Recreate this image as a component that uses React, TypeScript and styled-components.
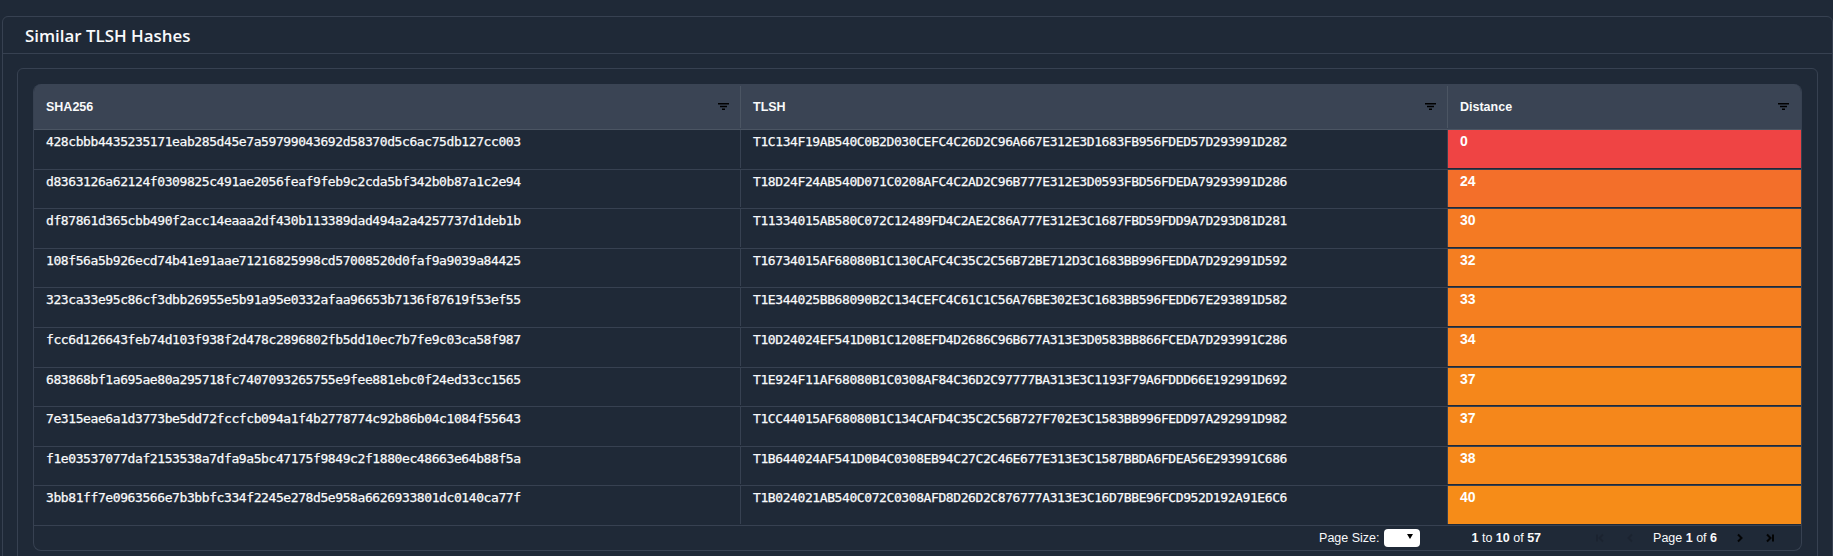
import React from 'react'
import styled, { createGlobalStyle } from 'styled-components'

interface HashRow {
  sha256: string
  tlsh: string
  distance: number
}

const rows: HashRow[] = [
  { sha256: '428cbbb4435235171eab285d45e7a59799043692d58370d5c6ac75db127cc003', tlsh: 'T1C134F19AB540C0B2D030CEFC4C26D2C96A667E312E3D1683FB956FDED57D293991D282', distance: 0 },
  { sha256: 'd8363126a62124f0309825c491ae2056feaf9feb9c2cda5bf342b0b87a1c2e94', tlsh: 'T18D24F24AB540D071C0208AFC4C2AD2C96B777E312E3D0593FBD56FDEDA79293991D286', distance: 24 },
  { sha256: 'df87861d365cbb490f2acc14eaaa2df430b113389dad494a2a4257737d1deb1b', tlsh: 'T11334015AB580C072C12489FD4C2AE2C86A777E312E3C1687FBD59FDD9A7D293D81D281', distance: 30 },
  { sha256: '108f56a5b926ecd74b41e91aae71216825998cd57008520d0faf9a9039a84425', tlsh: 'T16734015AF68080B1C130CAFC4C35C2C56B72BE712D3C1683BB996FEDDA7D292991D592', distance: 32 },
  { sha256: '323ca33e95c86cf3dbb26955e5b91a95e0332afaa96653b7136f87619f53ef55', tlsh: 'T1E344025BB68090B2C134CEFC4C61C1C56A76BE302E3C1683BB596FEDD67E293891D582', distance: 33 },
  { sha256: 'fcc6d126643feb74d103f938f2d478c2896802fb5dd10ec7b7fe9c03ca58f987', tlsh: 'T10D24024EF541D0B1C1208EFD4D2686C96B677A313E3D0583BB866FCEDA7D293991C286', distance: 34 },
  { sha256: '683868bf1a695ae80a295718fc7407093265755e9fee881ebc0f24ed33cc1565', tlsh: 'T1E924F11AF68080B1C0308AF84C36D2C97777BA313E3C1193F79A6FDDD66E192991D692', distance: 37 },
  { sha256: '7e315eae6a1d3773be5dd72fccfcb094a1f4b2778774c92b86b04c1084f55643', tlsh: 'T1CC44015AF68080B1C134CAFD4C35C2C56B727F702E3C1583BB996FEDD97A292991D982', distance: 37 },
  { sha256: 'f1e03537077daf2153538a7dfa9a5bc47175f9849c2f1880ec48663e64b88f5a', tlsh: 'T1B644024AF541D0B4C0308EB94C27C2C46E677E313E3C1587BBDA6FDEA56E293991C686', distance: 38 },
  { sha256: '3bb81ff7e0963566e7b3bbfc334f2245e278d5e958a6626933801dc0140ca77f', tlsh: 'T1B024021AB540C072C0308AFD8D26D2C876777A313E3C16D7BBE96FCD952D192A91E6C6', distance: 40 },
]

const distanceColor = (d: number): string =>
  `rgb(${Math.round(239 + d * 0.17)}, ${Math.round(68 + d * 1.8)}, ${Math.round(68 - d * 1.1)})`

const FilterIcon = () => (
  <FilterSvg viewBox="0 0 11 7" aria-hidden="true">
    <rect x="0" y="0" width="11" height="1.5" />
    <rect x="2" y="2.75" width="7" height="1.5" />
    <rect x="4" y="5.5" width="3" height="1.5" />
  </FilterSvg>
)

const App = (): JSX.Element => {
  return (
    <>
      <GlobalStyle />
      <Page>
        <OuterCard>
          <CardHeader>Similar TLSH Hashes</CardHeader>
          <CardBody>
            <InnerCard>
              <Grid>
                <HeaderRow>
                  <HeaderCell>
                    SHA256
                    <FilterIcon />
                  </HeaderCell>
                  <HeaderCell>
                    TLSH
                    <FilterIcon />
                  </HeaderCell>
                  <HeaderCell>
                    Distance
                    <FilterIcon />
                  </HeaderCell>
                </HeaderRow>

                {rows.map((row) => (
                  <Row key={row.sha256}>
                    <HashCell>{row.sha256}</HashCell>
                    <HashCell>{row.tlsh}</HashCell>
                    <DistanceCell style={{ background: distanceColor(row.distance) }}>
                      {row.distance}
                    </DistanceCell>
                  </Row>
                ))}

                <Paging>
                  <PageSize>
                    Page Size:
                    <SizeSelect>
                      <Caret />
                    </SizeSelect>
                  </PageSize>
                  <Summary>
                    <b>1</b> to <b>10</b> of <b>57</b>
                  </Summary>
                  <PagingNav>
                    <NavGroup>
                      <NavButton $disabled viewBox="0 0 10 10">
                        <path d="M2 1.5v7M8 1.5 4.5 5 8 8.5" />
                      </NavButton>
                      <NavButton $disabled viewBox="0 0 10 10">
                        <path d="M7 1.5 3.5 5 7 8.5" />
                      </NavButton>
                    </NavGroup>
                    <div>
                      Page <b>1</b> of <b>6</b>
                    </div>
                    <NavGroup>
                      <NavButton viewBox="0 0 10 10">
                        <path d="M3 1.5 6.5 5 3 8.5" />
                      </NavButton>
                      <NavButton viewBox="0 0 10 10">
                        <path d="M8 1.5v7M2 1.5 5.5 5 2 8.5" />
                      </NavButton>
                    </NavGroup>
                  </PagingNav>
                </Paging>
              </Grid>
            </InnerCard>
          </CardBody>
        </OuterCard>
      </Page>
    </>
  )
}

const GlobalStyle = createGlobalStyle`
  html, body {
    margin: 0;
    height: 556px;
    overflow: hidden;
    background: #1f2937;
  }
`

const Page = styled.div`
  padding: 16px 0 0 2px;
  height: 556px;
  box-sizing: border-box;
  overflow: hidden;
  color: #f9fafb;
`

const OuterCard = styled.section`
  border: 1px solid #374151;
  border-radius: 6px;
`

const CardHeader = styled.h2`
  margin: 0;
  height: 36px;
  padding-left: 22px;
  display: flex;
  align-items: center;
  border-bottom: 1px solid #374151;
  font: 600 16.9px 'Open Sans', sans-serif;
`

const CardBody = styled.div`
  padding: 14px;
`

const InnerCard = styled.div`
  border: 1px solid #374151;
  border-radius: 6px;
  padding: 15px;
`

const Grid = styled.div`
  border: 1px solid #374151;
  border-top: 0;
  border-radius: 8px;
  overflow: hidden;
`

const columns = 'grid-template-columns: 707px 707px 1fr;'

const HeaderRow = styled.div`
  display: grid;
  ${columns}
  height: 45px;
  background: #3a4454;
  border-bottom: 1px solid #4b5563;
`

const HeaderCell = styled.div`
  position: relative;
  display: flex;
  align-items: center;
  justify-content: space-between;
  padding: 0 12px;
  font: bold 12.5px 'Liberation Sans', Arial, sans-serif;

  &:not(:last-child)::after {
    content: '';
    position: absolute;
    right: 0;
    top: 2px;
    bottom: 1px;
    width: 1px;
    background: #4b5563;
  }
`

const FilterSvg = styled.svg`
  width: 11px;
  height: 7px;
  fill: #000;
`

const Row = styled.div`
  display: grid;
  ${columns}
  height: 39.6px;
  box-sizing: border-box;
  border-bottom: 1px solid #374151;
`

const HashCell = styled.div`
  padding: 4px 0 0 12px;
  border-right: 1px solid #374151;
  margin-bottom: 1px;
  font: 13px/15px 'DejaVu Sans Mono', monospace;
  letter-spacing: -0.41px;
  -webkit-text-stroke: 0.25px #f9fafb;
  white-space: nowrap;
  overflow: hidden;
`

const DistanceCell = styled.div`
  padding: 4px 0 0 12px;
  margin-bottom: 1px;
  font: bold 14px/15px 'Liberation Sans', Arial, sans-serif;
  color: #fff;
`

const Paging = styled.div`
  display: flex;
  align-items: center;
  justify-content: flex-end;
  height: 24px;
  padding: 1px 26px 0 0;
  box-sizing: border-box;
  font: 12.5px 'Liberation Sans', Arial, sans-serif;
`

const PageSize = styled.div`
  display: flex;
  align-items: center;
  gap: 4px;
  margin-right: 52px;
`

const SizeSelect = styled.div`
  position: relative;
  width: 36px;
  height: 18px;
  background: #fff;
  border-radius: 4px;
`

const Caret = styled.span`
  position: absolute;
  top: 5px;
  right: 7px;
  border-left: 3.5px solid transparent;
  border-right: 3.5px solid transparent;
  border-top: 5px solid #000;
`

const Summary = styled.div`
  margin-right: 54px;
`

const PagingNav = styled.div`
  display: flex;
  align-items: center;
  gap: 18px;
`

const NavGroup = styled.div`
  display: flex;
  align-items: center;
  gap: 20px;
`

const NavButton = styled.svg<{ $disabled?: boolean }>`
  width: 10px;
  height: 10px;
  fill: none;
  stroke: #000;
  stroke-width: 2;
  opacity: ${(p) => (p.$disabled ? 0.12 : 0.9)};
`

export default App
